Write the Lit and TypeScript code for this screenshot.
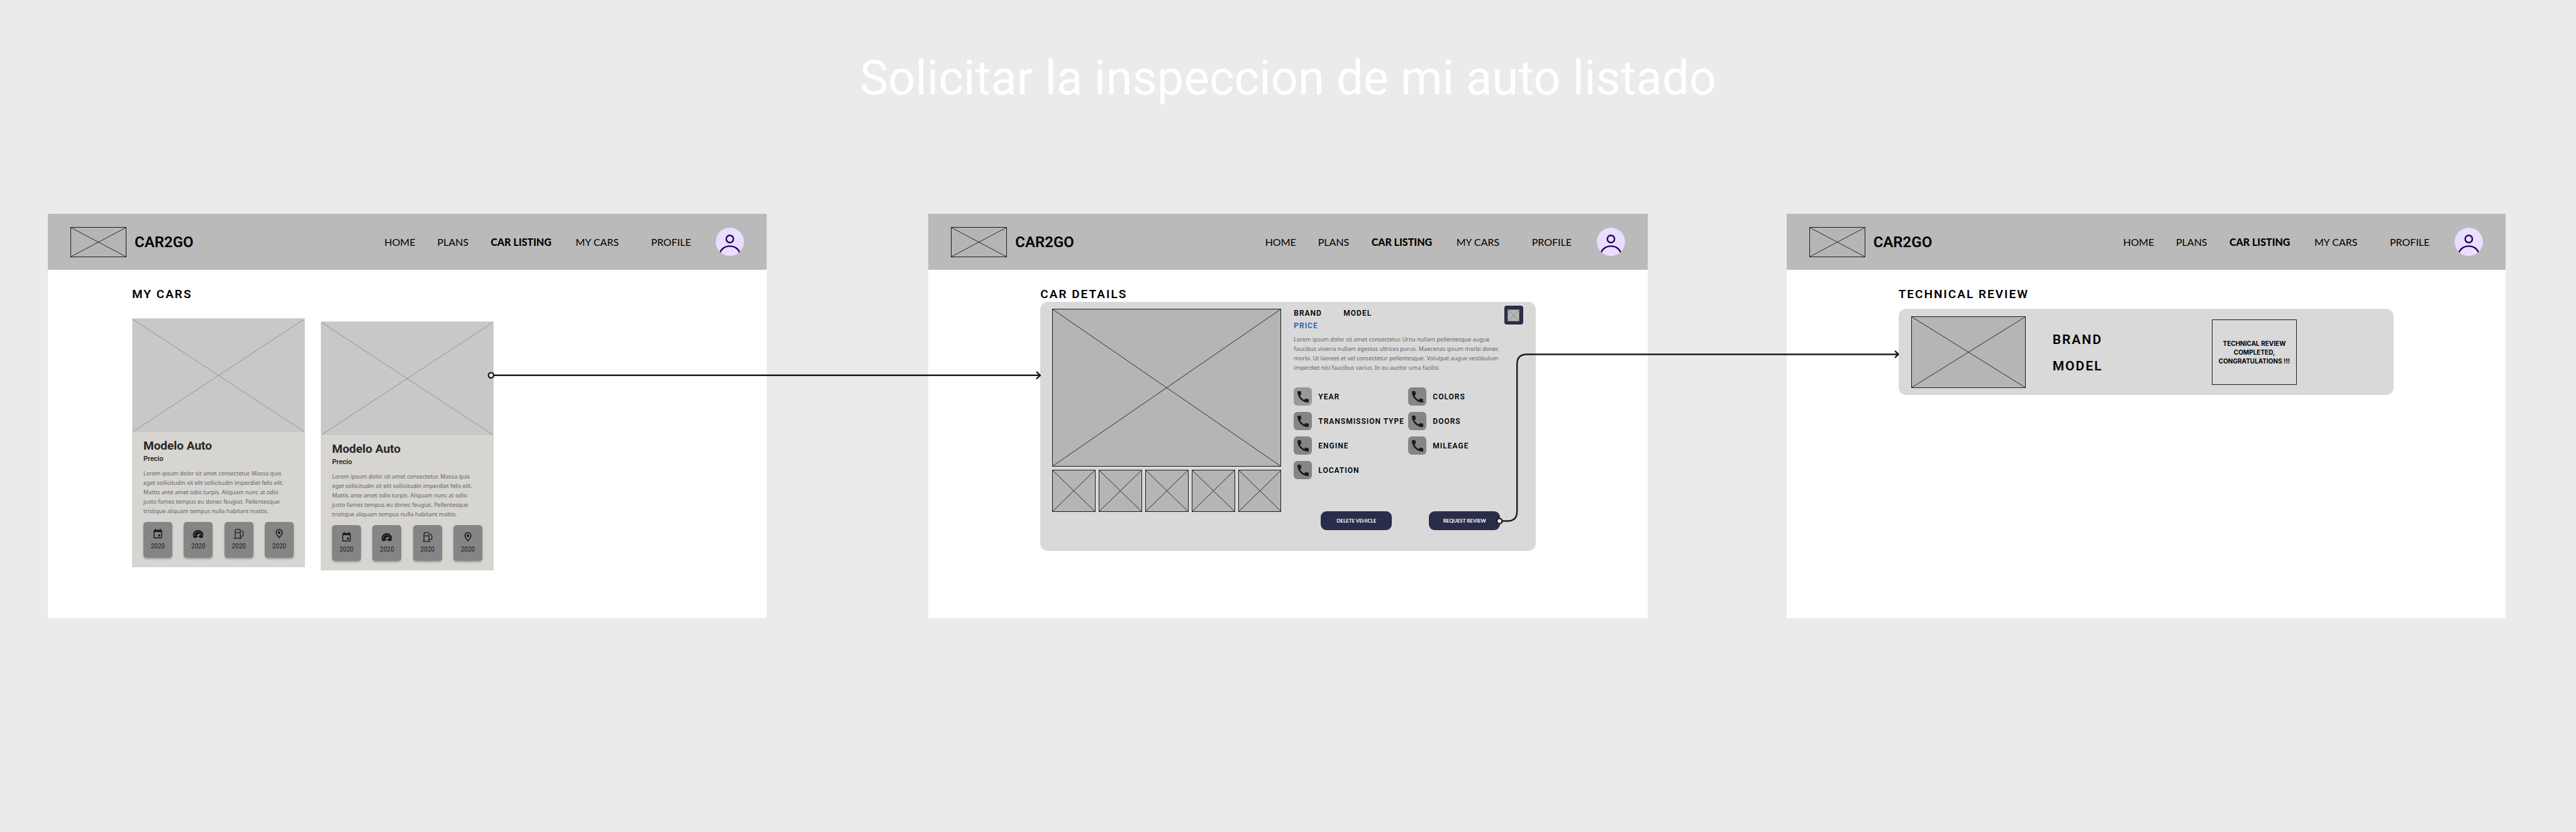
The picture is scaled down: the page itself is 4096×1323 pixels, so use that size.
import { LitElement, html, css, svg } from "lit";
import { customElement, property } from "lit/decorators.js";
import { classMap } from "lit/directives/class-map.js";

const CARD_LINES = [
  "Lorem ipsum dolor sit amet consectetur. Massa quis",
  "eget sollicitudin sit elit sollicitudin imperdiet felis elit.",
  "Mattis ante amet odio turpis. Aliquam nunc at odio",
  "justo fames tempus eu donec feugiat. Pellentesque",
  "tristique aliquam tempus nulla habitant mattis.",
];

const DETAIL_LINES = [
  "Lorem ipsum dolor sit amet consectetur. Urna nullam pellentesque augue",
  "faucibus viverra nullam egestas ultrices purus. Maecenas ipsum morbi donec",
  "morbi. Ut laoreet et vel consectetur pellentesque. Volutpat augue vestibulum",
  "imperdiet nisi faucibus varius. In eu auctor urna facilisi.",
];

const lines = (items: string[]) => items.map((text) => html`<span class="line">${text}</span> `);

/* ---------- icons ---------- */

const calendarIcon = svg`
  <path fill-rule="evenodd" d="M16 1.6v1.6H8V1.6a.9.9 0 0 0-1.8 0v1.6H5A2 2 0 0 0 3 5.200V19.400a2 2 0 0 0 2 2h14a2 2 0 0 0 2-2V5.200a2 2 0 0 0-2-2h-1.200V1.600a.9.9 0 0 0-1.800 0zM5 8h14v11.400H5z"/>
  <rect x="12.800" y="13" width="4.200" height="4.200" rx="1"/>`;

const gaugeIcon = svg`
  <path d="M12 3.500A11 11 0 0 0 1 14.400c0 1.900.4 3.600 1.200 5 .3.700.9 1.100 1.600 1.100h3.400c.7 0 1.100-.3 1.500-.9.300-.6.700-.8 1.300-.8h4c.6 0 1 .2 1.300.8.400.6.800.9 1.500.9h3.400c.7 0 1.300-.4 1.600-1.100.8-1.400 1.200-3.100 1.200-5A11 11 0 0 0 12 3.500z"/>
  <g fill="#858585">
    <circle cx="4" cy="15" r="1"/><circle cx="5" cy="11" r="1"/><circle cx="7.800" cy="8" r="1"/>
    <circle cx="12" cy="6.600" r="1"/><circle cx="16.200" cy="8" r="1"/><circle cx="20" cy="15" r="1"/>
    <path d="M19 10.600l-5 5.600a2.300 2.300 0 1 1-2.300-3z"/>
  </g>`;

const fuelIcon = svg`
  <g fill="none" stroke="#1a1a1a" stroke-width="1.700" stroke-linecap="round" stroke-linejoin="round">
    <path d="M4.200 21V4.600A2 2 0 0 1 6.200 2.600h6.600a2 2 0 0 1 2 2V21"/>
    <path d="M2 21.200h15.400M4.400 9.600h10.200"/>
    <path d="M17.600 5.400l2.600 2.200c.5.500.8 1 .8 1.800v5.600c0 1-.8 1.800-1.800 1.800h-4"/>
  </g>`;

const pinIcon = svg`
  <path fill-rule="evenodd" d="M12 1.800c-4.200 0-7.400 3.300-7.400 7.300 0 5.200 5.700 9.400 7.400 13.300 1.700-3.900 7.400-8.100 7.400-13.300 0-4-3.200-7.300-7.400-7.300zm0 2c3.200 0 5.400 2.400 5.400 5.300 0 3.500-3.600 6.600-5.400 9.700-1.800-3.100-5.400-6.200-5.400-9.700 0-2.900 2.200-5.300 5.400-5.300z"/>
  <circle cx="12" cy="9.200" r="2.800"/>`;

const phoneIcon = svg`
  <path d="M20.010 15.380c-1.230 0-2.420-.2-3.530-.56-.35-.12-.74-.03-1.010.24l-1.570 1.970c-2.830-1.350-5.480-3.900-6.890-6.830l1.950-1.660c.27-.28.35-.67.24-1.020-.37-1.110-.56-2.300-.56-3.530 0-.54-.45-.99-.99-.99H4.190C3.650 3 3 3.240 3 3.990 3 13.280 10.730 21 20.010 21c.71 0 .99-.63.99-1.180v-3.450c0-.54-.45-.99-.99-.99z"/>`;

/* ---------- image placeholder ---------- */

@customElement("image-placeholder")
export class ImagePlaceholder extends LitElement {
  static styles = css`
    :host {
      --fill: #b5b5b5;
      --edge: #1a1a1a;
      --cross: #2b2b2b;
      display: block;
      box-sizing: border-box;
      background: var(--fill);
      border: 1px solid var(--edge);
    }
    svg {
      display: block;
      width: 100%;
      height: 100%;
    }
    line {
      stroke: var(--cross);
      stroke-width: 1;
      vector-effect: non-scaling-stroke;
    }
  `;
  render() {
    return html`<svg viewBox="0 0 100 100" preserveAspectRatio="none" aria-hidden="true">
      <line x1="0" y1="0" x2="100" y2="100"></line>
      <line x1="100" y1="0" x2="0" y2="100"></line>
    </svg>`;
  }
}

/* ---------- site header ---------- */

@customElement("site-header")
export class SiteHeader extends LitElement {
  static styles = css`
    .bar {
      display: flex;
      align-items: center;
      height: 89px;
      padding: 0 36px;
      background: #bababa;
    }
    .logo {
      width: 89px;
      height: 48px;
    }
    .brand {
      margin-left: 13px;
      font: 600 24px/28px Roboto, sans-serif;
      color: #000;
    }
    .links {
      display: grid;
      grid-template-columns: 84px 85px 135px 120px 103px;
      margin-left: auto;
    }
    .link {
      font: 400 16px/24px Lato, sans-serif;
      color: #000;
      text-decoration: none;
      white-space: nowrap;
    }
    .current {
      font-weight: 900;
    }
    .avatar {
      display: block;
      width: 45px;
      height: 45px;
      padding: 0;
      border: 0;
      border-radius: 50%;
      overflow: hidden;
      background: #eaddff;
    }
    .avatar svg {
      display: block;
      width: 100%;
      height: 100%;
    }
  `;
  render() {
    const items = ["HOME", "PLANS", "CAR LISTING", "MY CARS", "PROFILE"];
    return html`<header class="bar">
      <image-placeholder class="logo"></image-placeholder>
      <span class="brand">CAR2GO</span>
      <nav class="links">
        ${items.map(
          (item) => html`<a href="#" class=${classMap({ link: true, current: item === "CAR LISTING" })}>${item}</a>`,
        )}
      </nav>
      <button class="avatar" aria-label="Account">
        <svg viewBox="0 0 75 75" fill="none" stroke="#21005d" stroke-width="4">
          <circle cx="37.500" cy="30" r="9.500"></circle>
          <path d="M11 69C13 57 24 49 37.500 49S62 57 64 69"></path>
        </svg>
      </button>
    </header>`;
  }
}

/* ---------- car card ---------- */

@customElement("car-card")
export class CarCard extends LitElement {
  static styles = css`
    .card {
      box-sizing: border-box;
      width: 275px;
      padding: 1px 1px 15px;
      background: #d6d5d1;
    }
    .photo {
      --fill: #c8c8c8;
      --edge: #c8c8c8;
      --cross: #919191;
      height: 180px;
    }
    .body {
      padding: 11px 17px 0;
    }
    .title {
      margin: 0;
      font: 700 19px/22px Roboto, sans-serif;
      color: #262626;
    }
    .price {
      margin: 3px 0 0;
      font: 600 11px/14px Roboto, sans-serif;
      color: #262626;
    }
    .text {
      margin: 8px 0 0;
      font: 400 9px/15px "Noto Sans", "Open Sans", sans-serif;
      color: #666;
    }
    .line {
      display: block;
      white-space: nowrap;
    }
    .chips {
      display: flex;
      justify-content: space-between;
      margin: 10px 0 0;
      padding: 0;
      list-style: none;
    }
    .chip {
      display: flex;
      flex-direction: column;
      align-items: center;
      gap: 5px;
      box-sizing: border-box;
      width: 46px;
      height: 57px;
      padding-top: 10px;
      border-radius: 5px;
      background: #858585;
      box-shadow: 0 2px 3px rgba(0, 0, 0, 0.25);
      font: 400 10px/12px Roboto, sans-serif;
      color: #1a1a1a;
    }
    .icon {
      width: 18px;
      height: 18px;
      fill: #1a1a1a;
    }
  `;
  render() {
    return html`<article class="card">
      <image-placeholder class="photo"></image-placeholder>
      <div class="body">
        <h3 class="title">Modelo Auto</h3>
        <p class="price">Precio</p>
        <p class="text">${lines(CARD_LINES)}</p>
        <ul class="chips">
          ${[calendarIcon, gaugeIcon, fuelIcon, pinIcon].map(
            (icon) => html`<li class="chip">
              <svg class="icon" viewBox="0 0 24 24" aria-hidden="true">${icon}</svg>
              <span>2020</span>
            </li>`,
          )}
        </ul>
      </div>
    </article>`;
  }
}

/* ---------- car details panel ---------- */

@customElement("car-details")
export class CarDetails extends LitElement {
  static styles = css`
    .panel {
      display: flex;
      gap: 20px;
      box-sizing: border-box;
      padding: 6px 20px 33px 19px;
      border-radius: 12px;
      background: #d9d9d9;
    }
    .gallery {
      width: 364px;
      padding-top: 5px;
    }
    .main {
      height: 251px;
    }
    .thumbs {
      display: grid;
      grid-template-columns: repeat(5, 1fr);
      gap: 5px;
      margin-top: 5px;
    }
    .thumb {
      height: 67px;
    }
    .info {
      flex: 1;
      min-width: 0;
    }
    .head {
      display: flex;
      justify-content: space-between;
      align-items: flex-start;
    }
    .names {
      display: grid;
      grid-template-columns: 79px auto;
      margin: 2px 0 0;
      font: 600 12px/20px Roboto, sans-serif;
      letter-spacing: 1px;
      color: #000;
    }
    .price {
      color: #2b5cb3;
    }
    .save {
      display: grid;
      place-items: center;
      width: 30px;
      height: 30px;
      padding: 0;
      border: 0;
      border-radius: 4px;
      background: #2a2d4a;
    }
    .save image-placeholder {
      --edge: #858585;
      --cross: #858585;
      width: 19px;
      height: 19px;
    }
    .text {
      margin: 4px 0 0;
      font: 400 9px/15px "Noto Sans", "Open Sans", sans-serif;
      color: #666;
    }
    .line {
      display: block;
      white-space: nowrap;
    }
    .specs {
      display: grid;
      grid-template-columns: 182px 1fr;
      grid-template-rows: repeat(4, 29px);
      grid-auto-flow: column;
      row-gap: 10px;
      margin: 24px 0 0;
      padding: 0;
      list-style: none;
    }
    .spec {
      display: flex;
      align-items: center;
      gap: 10px;
      font: 600 12px/20px Roboto, sans-serif;
      letter-spacing: 1px;
      white-space: nowrap;
      color: #000;
    }
    .badge {
      display: grid;
      place-items: center;
      width: 29px;
      height: 29px;
      border-radius: 6px;
      background: #858585;
    }
    .light {
      background: #999;
    }
    .badge svg {
      width: 24px;
      height: 24px;
      fill: #1a1a1a;
    }
    .actions {
      display: flex;
      gap: 59px;
      margin: 51px 0 0 43px;
    }
    .action {
      width: 113px;
      height: 30px;
      padding: 0;
      border: 0;
      border-radius: 9px;
      background: #2a2d4a;
      color: #fff;
      font: 700 8px/12px Lato, sans-serif;
    }
  `;
  render() {
    const specs = ["YEAR", "TRANSMISSION TYPE", "ENGINE", "LOCATION", "COLORS", "DOORS", "MILEAGE"];
    return html`<article class="panel">
      <div class="gallery">
        <image-placeholder class="main"></image-placeholder>
        <div class="thumbs">
          ${[1, 2, 3, 4, 5].map(() => html`<image-placeholder class="thumb"></image-placeholder>`)}
        </div>
      </div>
      <div class="info">
        <div class="head">
          <div class="names">
            <span>BRAND</span><span>MODEL</span>
            <span class="price">PRICE</span>
          </div>
          <button class="save" aria-label="Save"><image-placeholder></image-placeholder></button>
        </div>
        <p class="text">${lines(DETAIL_LINES)}</p>
        <ul class="specs">
          ${specs.map(
            (name) => html`<li class="spec">
              <span class=${classMap({ badge: true, light: name === "YEAR" })}>
                <svg viewBox="0 0 24 24" aria-hidden="true">${phoneIcon}</svg>
              </span>
              ${name}
            </li>`,
          )}
        </ul>
        <div class="actions">
          <button class="action">DELETE VEHICLE</button>
          <button class="action">REQUEST REVIEW</button>
        </div>
      </div>
    </article>`;
  }
}

/* ---------- review result panel ---------- */

@customElement("review-result")
export class ReviewResult extends LitElement {
  static styles = css`
    .panel {
      display: flex;
      align-items: center;
      box-sizing: border-box;
      height: 137px;
      padding: 0 20px;
      border-radius: 12px;
      background: #d9d9d9;
    }
    .photo {
      width: 182px;
      height: 114px;
    }
    .names {
      flex: 1;
      margin-left: 43px;
      padding-top: 2px;
      font: 600 21px/42px Roboto, sans-serif;
      letter-spacing: 2px;
      color: #000;
    }
    .name {
      display: block;
    }
    .status {
      display: flex;
      align-items: center;
      box-sizing: border-box;
      width: 135px;
      height: 104px;
      margin: 0 134px 0 0;
      border: 1px solid #1a1a1a;
      font: 700 10px/14px Inter, sans-serif;
      text-align: center;
      color: #000;
    }
    .message {
      flex: 1;
    }
    .line {
      display: block;
      white-space: nowrap;
    }
  `;
  render() {
    return html`<article class="panel">
      <image-placeholder class="photo"></image-placeholder>
      <div class="names"><span class="name">BRAND</span><span class="name">MODEL</span></div>
      <p class="status">
        <span class="message">${lines(["TECHNICAL REVIEW", "COMPLETED,", "CONGRATULATIONS !!!"])}</span>
      </p>
    </article>`;
  }
}

/* ---------- screen frame ---------- */

@customElement("screen-frame")
export class ScreenFrame extends LitElement {
  static styles = css`
    :host {
      display: block;
    }
    .frame {
      box-sizing: border-box;
      min-height: 643px;
      background: #fff;
    }
    .content {
      padding: 28px 178px 0;
    }
    .wide {
      padding: 28px 134px 0;
    }
    .heading {
      margin: 0;
      font: 600 19px/22px Roboto, sans-serif;
      letter-spacing: 2px;
      color: #000;
    }
  `;
  @property() heading = "";
  @property({ type: Boolean }) wide = false;
  render() {
    return html`<section class="frame">
      <site-header></site-header>
      <div class=${classMap({ content: true, wide: this.wide })}>
        <h2 class="heading">${this.heading}</h2>
        <slot></slot>
      </div>
    </section>`;
  }
}

/* ---------- board ---------- */

@customElement("app-root")
export class AppRoot extends LitElement {
  static styles = css`
    :host {
      display: block;
    }
    .board {
      position: relative;
      box-sizing: border-box;
      min-height: 100vh;
      padding-top: 79px;
      overflow: hidden;
      background: #ebebeb;
    }
    .title {
      margin: 0 0 171px;
      font: 400 76px/90px Roboto, sans-serif;
      text-align: center;
      color: #fff;
    }
    .screens {
      display: grid;
      grid-template-columns: 76px 1fr 257px 1fr 221px 1fr 112px;
    }
    .listing {
      grid-column: 2;
    }
    .details {
      grid-column: 4;
    }
    .review {
      grid-column: 6;
    }
    .cards {
      display: flex;
      gap: 25px;
      margin-top: 27px;
    }
    .lowered {
      margin-top: 5px;
    }
    .detail-slot {
      margin-top: 1px;
    }
    .review-slot {
      margin-top: 12px;
    }
    .flow {
      position: absolute;
      top: 0;
      left: 0;
      width: 100%;
      pointer-events: none;
    }
  `;
  render() {
    return html`<main class="board">
      <h1 class="title">Solicitar la inspeccion de mi auto listado</h1>
      <div class="screens">
        <screen-frame class="listing" heading="MY CARS" wide>
          <div class="cards">
            <car-card></car-card>
            <car-card class="lowered"></car-card>
          </div>
        </screen-frame>
        <screen-frame class="details" heading="CAR DETAILS">
          <div class="detail-slot"><car-details></car-details></div>
        </screen-frame>
        <screen-frame class="review" heading="TECHNICAL REVIEW">
          <div class="review-slot"><review-result></review-result></div>
        </screen-frame>
      </div>
      <svg
        class="flow"
        viewBox="0 0 6877 2222"
        fill="none"
        stroke="#1a1a1a"
        stroke-width="4"
        stroke-linecap="round"
        stroke-linejoin="round"
        aria-hidden="true"
      >
        <path d="M1319 1002H2776M2768 993.500L2777 1002L2768 1010.500"></path>
        <circle cx="1311" cy="1002" r="7" fill="#ebebeb"></circle>
        <path d="M4010 1391H4024Q4050 1391 4050 1365V972Q4050 946 4076 946H5067M5060 938L5068 946L5060 954"></path>
        <circle cx="4003" cy="1391" r="7" fill="#ebebeb"></circle>
      </svg>
    </main>`;
  }
}
